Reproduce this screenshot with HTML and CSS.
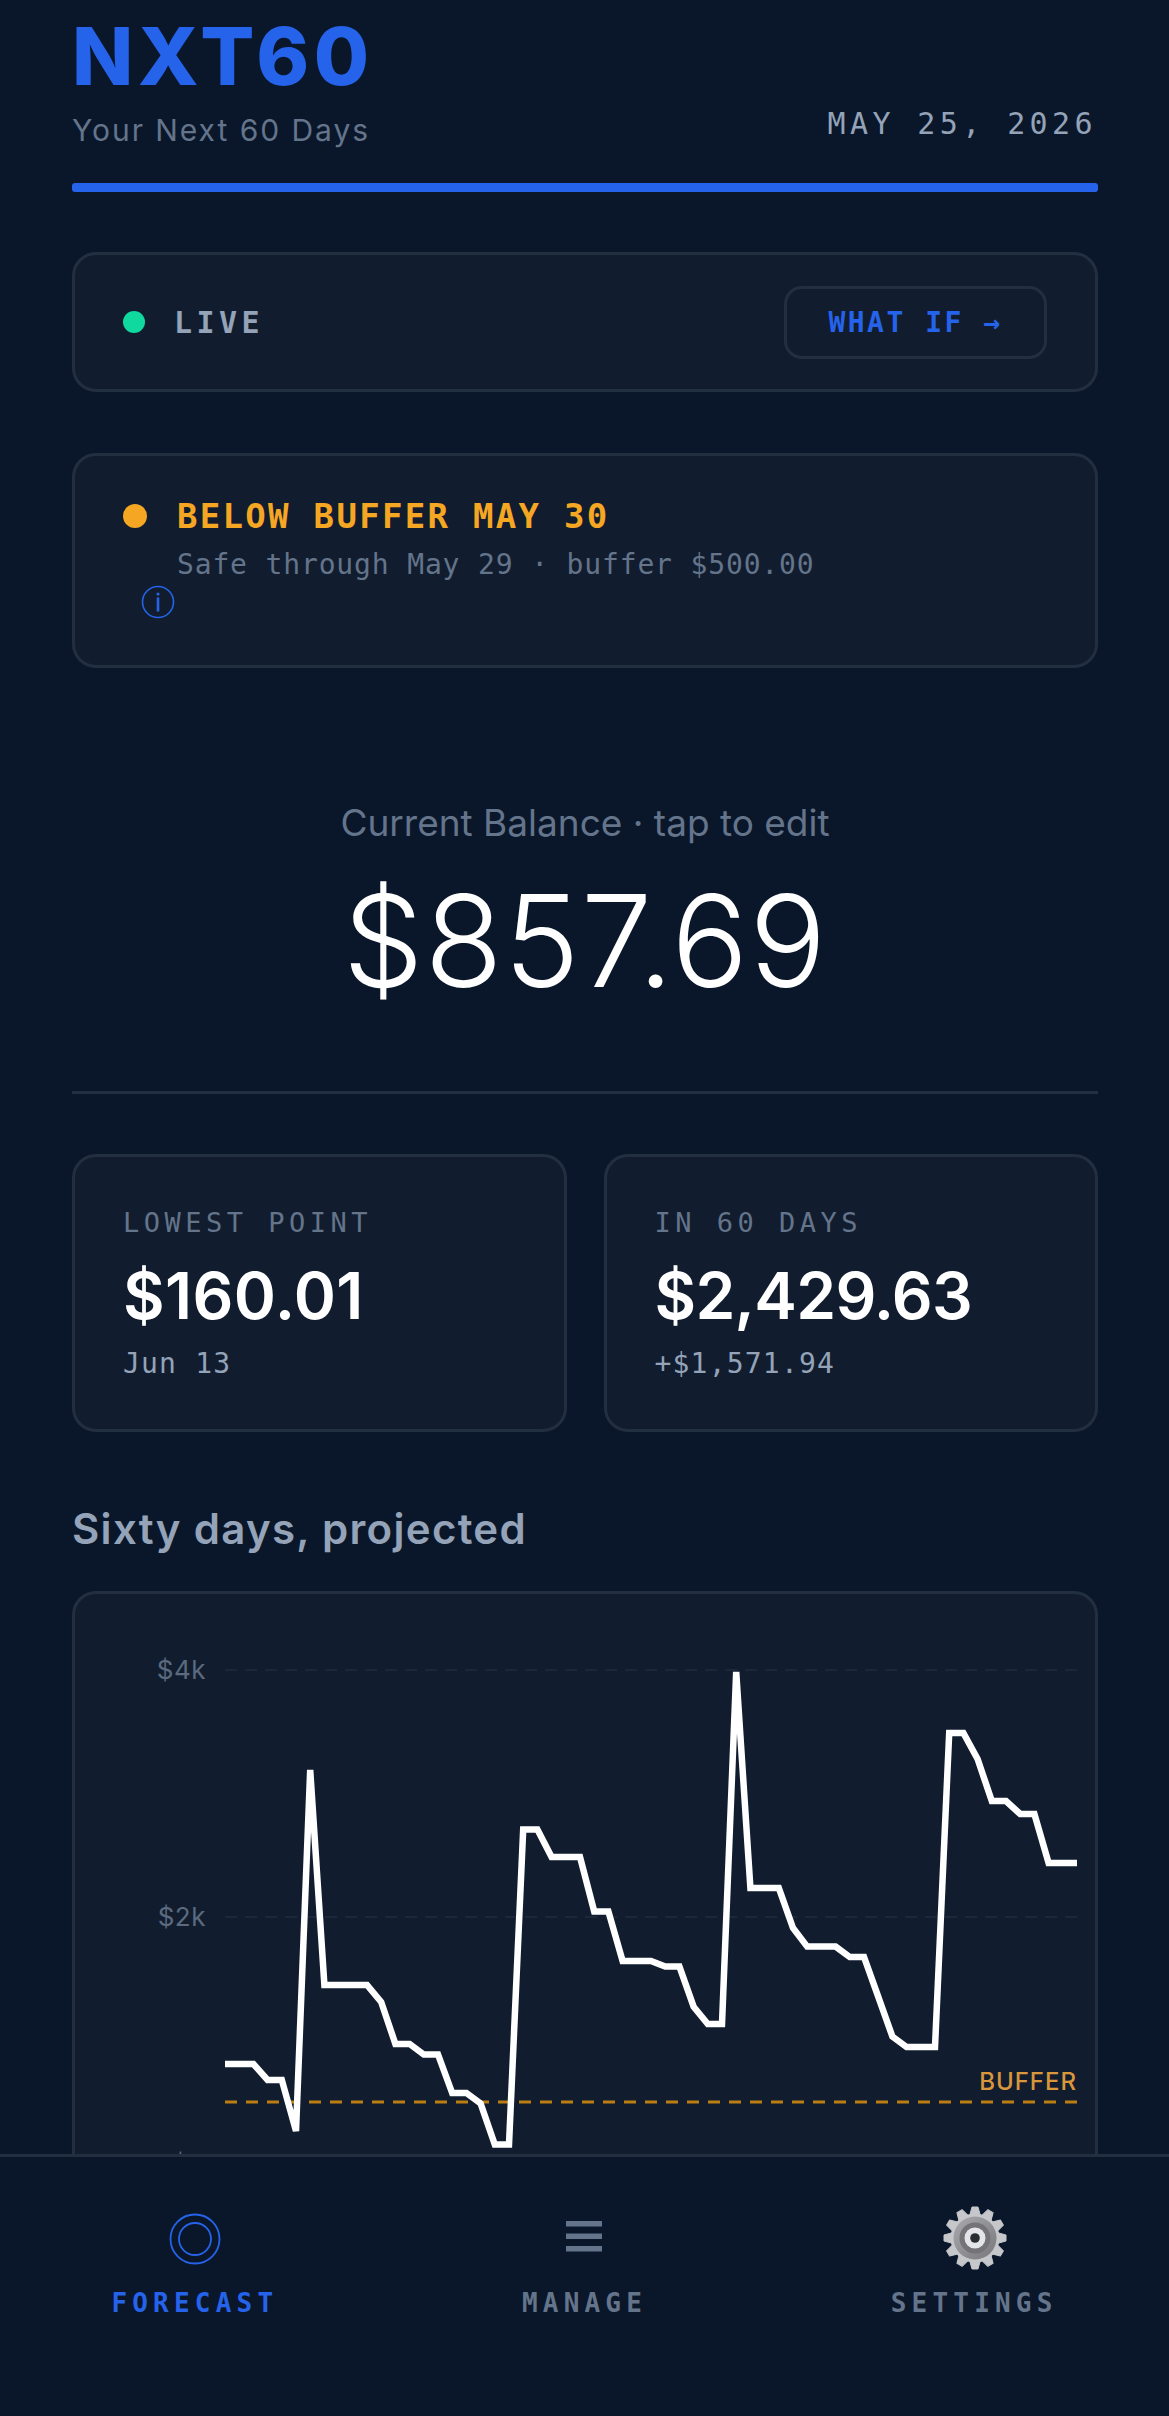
FILE: index.html
```html
<!DOCTYPE html>
<html lang="en">
<head>
  <meta charset="UTF-8">
  <meta name="viewport" content="width=device-width, initial-scale=1.0">
  <title>NXT60</title>
  <link rel="stylesheet" href="styles.css">
</head>
<body>
  <main class="page">
    <header class="header">
      <div>
        <h1 class="logo">NXT60</h1>
        <div class="tagline">Your Next 60 Days</div>
      </div>
      <div class="today">MAY 25, 2026</div>
    </header>
    <div class="rule"></div>

    <section class="card status">
      <div class="status-left">
        <span class="dot dot-live"></span>
        <span class="status-text">LIVE</span>
      </div>
      <button class="whatif">WHAT IF →</button>
    </section>

    <section class="card alert">
      <div class="alert-row">
        <span class="dot dot-warn"></span>
        <span class="alert-title">BELOW BUFFER MAY 30</span>
      </div>
      <div class="alert-sub">Safe through May 29 · buffer $500.00</div>
      <svg class="info" width="34" height="34" viewBox="0 0 34 34">
        <circle cx="17" cy="17" r="15.5" fill="none" stroke="#2563eb" stroke-width="1.6"/>
        <rect x="15.7" y="12.5" width="2.6" height="14" fill="#2563eb"/>
        <circle cx="17" cy="9" r="1.6" fill="#2563eb"/>
      </svg>
    </section>

    <section class="balance">
      <div class="balance-label">Current Balance · tap to edit</div>
      <div class="balance-value">$857.69</div>
    </section>

    <div class="stats">
      <div class="card stat">
        <div class="stat-label">LOWEST POINT</div>
        <div class="stat-value">$160.01</div>
        <div class="stat-sub">Jun 13</div>
      </div>
      <div class="card stat">
        <div class="stat-label">IN 60 DAYS</div>
        <div class="stat-value">$2,429.63</div>
        <div class="stat-sub">+$1,571.94</div>
      </div>
    </div>

    <h2 class="section-title">Sixty days, projected</h2>

    <div class="card chart">
      <!-- viewBox uses the same numbers as the page so the chart lines up with the screen -->
      <svg class="chart-svg" width="1019" height="640" viewBox="75 1594 1019 640">
        <g class="grid-lines">
          <line x1="225" y1="1670" x2="1079" y2="1670"/>
          <line x1="225" y1="1917" x2="1079" y2="1917"/>
          <line x1="225" y1="2164" x2="1079" y2="2164"/>
        </g>
        <g class="axis">
          <text x="206" y="1679">$4k</text>
          <text x="206" y="1926">$2k</text>
          <text x="206" y="2173">$0</text>
        </g>
        <line class="buffer-line" x1="225" y1="2102" x2="1077" y2="2102"/>
        <text class="buffer-label" x="1077" y="2090">BUFFER</text>
        <polyline class="balance-line" points="225,2064 239.2,2064 253.4,2064 267.6,2080 281.8,2080 296,2131 310.2,1770 324.4,1985 338.6,1985 352.8,1985 367,1985 381.2,2002 395.4,2044 409.6,2044 423.8,2054.5 438,2054.5 452.2,2093 466.4,2093 480.6,2103.5 494.8,2144.5 509,2144.5 523.2,1829.5 537.4,1829.5 551.6,1857 565.8,1857 580,1857 594.2,1911.4 608.4,1911.4 622.6,1961 636.8,1961 651,1961 665.2,1966.5 679.4,1966.5 693.6,2006.7 707.8,2024 722,2024 736.2,1672 750.4,1888 764.6,1888 778.8,1888 793,1928 807.2,1946.6 821.4,1946.6 835.6,1946.6 849.8,1957 864,1957 878.2,1996.7 892.4,2036.5 906.6,2047 920.8,2047 935,2047 949.2,1733 963.4,1733 977.6,1759 991.8,1801 1006,1801 1020.2,1814 1034.4,1814 1048.6,1863 1062.8,1863 1077,1863"/>
      </svg>
    </div>
  </main>

  <nav class="tabbar">
    <div class="tab tab-active">
      <span class="tab-icon">
        <svg width="52" height="52" viewBox="0 0 52 52" fill="none" stroke="#2563eb" stroke-width="1.8">
          <circle cx="26" cy="26" r="24.5"/>
          <circle cx="26" cy="26" r="16"/>
        </svg>
      </span>
      <span class="tab-label">FORECAST</span>
    </div>
    <div class="tab">
      <span class="tab-icon tab-icon-bars">
        <svg width="36" height="32" viewBox="0 0 36 32" fill="#64748b">
          <rect x="0" y="0" width="36" height="5.5"/>
          <rect x="0" y="12.5" width="36" height="5.5"/>
          <rect x="0" y="25" width="36" height="5.5"/>
        </svg>
      </span>
      <span class="tab-label">MANAGE</span>
    </div>
    <div class="tab">
      <span class="tab-icon tab-icon-gear">
        <svg width="66" height="66" viewBox="-33 -33 66 66">
          <defs>
            <linearGradient id="gearRing" x1="0" y1="0" x2="1" y2="1">
              <stop offset="0" stop-color="#a9a9ae"/>
              <stop offset="1" stop-color="#77777c"/>
            </linearGradient>
            <polygon id="gearTooth" points="-3,-31 3,-31 5.5,-22 -5.5,-22" fill="#c6c7cb" stroke="#c6c7cb" stroke-width="1" stroke-linejoin="round"/>
          </defs>
          <use href="#gearTooth"/>
          <use href="#gearTooth" transform="rotate(30)"/>
          <use href="#gearTooth" transform="rotate(60)"/>
          <use href="#gearTooth" transform="rotate(90)"/>
          <use href="#gearTooth" transform="rotate(120)"/>
          <use href="#gearTooth" transform="rotate(150)"/>
          <use href="#gearTooth" transform="rotate(180)"/>
          <use href="#gearTooth" transform="rotate(210)"/>
          <use href="#gearTooth" transform="rotate(240)"/>
          <use href="#gearTooth" transform="rotate(270)"/>
          <use href="#gearTooth" transform="rotate(300)"/>
          <use href="#gearTooth" transform="rotate(330)"/>
          <circle r="24.5" fill="#c6c7cb"/>
          <circle r="21.5" fill="url(#gearRing)"/>
          <circle r="15.5" fill="#737378"/>
          <circle r="10.5" fill="#e4e5e8"/>
          <circle r="4.8" fill="#2a2d33"/>
        </svg>
      </span>
      <span class="tab-label">SETTINGS</span>
    </div>
  </nav>
</body>
</html>
```

FILE: styles.css
```css
html, body {
  height: 100%;
  overflow: hidden;
}

body {
  margin: 0;
  background: #0a172a;
  color: white;
  font-family: Inter, "Liberation Sans", sans-serif;
}

.page {
  padding: 0 71px 0 72px;
}

.card {
  background: #111d2e;
  border: 3px solid #222f41;
  border-radius: 24px;
  box-sizing: border-box;
}

.dot {
  display: inline-block;
  border-radius: 50%;
}

/* header */
.header {
  display: flex;
  justify-content: space-between;
  align-items: flex-end;
  height: 183px;
  padding-bottom: 32px;
  box-sizing: border-box;
}

.logo {
  margin: 0;
  font-size: 80px;
  font-weight: 800;
  line-height: 108px;
  letter-spacing: 4.6px;
  color: #2563eb;
}

.tagline {
  font-size: 30px;
  line-height: 41px;
  letter-spacing: 1.95px;
  color: #64748b;
}

.today {
  margin: 0 1px 7px 0;
  font-family: "DejaVu Sans Mono", monospace;
  font-size: 30px;
  line-height: 40px;
  letter-spacing: 4.4px;
  color: #94a3b8;
}

.rule {
  height: 9px;
  border-radius: 3px;
  background: #2563eb;
}

/* live strip */
.status {
  display: flex;
  align-items: center;
  justify-content: space-between;
  height: 140px;
  margin-top: 60px;
  padding: 0 48px;
}

.status-left {
  display: flex;
  align-items: center;
  gap: 29px;
}

.dot-live {
  width: 22px;
  height: 22px;
  background: #10d9a0;
}

.status-text {
  font-family: "DejaVu Sans Mono", monospace;
  font-size: 30px;
  font-weight: 700;
  letter-spacing: 4.4px;
  color: #94a3b8;
}

.whatif {
  width: 263px;
  height: 73px;
  padding: 0;
  background: none;
  border: 3px solid #222f41;
  border-radius: 18px;
  font-family: "DejaVu Sans Mono", monospace;
  font-size: 28px;
  font-weight: 700;
  letter-spacing: 2.5px;
  color: #2563eb;
}

/* alert */
.alert {
  position: relative;
  height: 215px;
  margin-top: 61px;
  padding: 40px 48px 0;
}

.alert-row {
  display: flex;
  align-items: center;
  gap: 30px;
}

.dot-warn {
  width: 24px;
  height: 24px;
  background: #f5a623;
}

.alert-title {
  font-family: "DejaVu Sans Mono", monospace;
  font-size: 34px;
  font-weight: 700;
  letter-spacing: 2.3px;
  color: #f5a623;
}

.alert-sub {
  margin: 12px 0 0 54px;
  font-family: "DejaVu Sans Mono", monospace;
  font-size: 28px;
  letter-spacing: 0.85px;
  color: #64748b;
}

.info {
  display: block;
  margin: 4px 0 0 18px;
}

/* balance */
.balance {
  height: 426px;
  box-sizing: border-box;
  padding-top: 134px;
  border-bottom: 3px solid #222f41;
  text-align: center;
}

.balance-label {
  font-size: 37px;
  line-height: 42px;
  color: #64748b;
}

.balance-value {
  margin-top: 27px;
  font-size: 128px;
  font-weight: 300;
  line-height: 140px;
  letter-spacing: 1px;
}

/* stats */
.stats {
  display: grid;
  grid-template-columns: 1fr 1fr;
  gap: 37px;
  margin-top: 60px;
}

.stat {
  height: 278px;
  padding: 46px 48px 0;
}

.stat-label {
  font-family: "DejaVu Sans Mono", monospace;
  font-size: 27px;
  line-height: 40px;
  letter-spacing: 4.5px;
  color: #64748b;
}

.stat-value {
  margin-top: 14px;
  font-size: 64px;
  font-weight: 600;
  line-height: 78px;
  letter-spacing: 0.4px;
}

.stat:last-child .stat-value {
  letter-spacing: -0.7px;
}

.stat-sub {
  margin-top: 9px;
  font-family: "DejaVu Sans Mono", monospace;
  font-size: 28px;
  line-height: 40px;
  letter-spacing: 1.2px;
  color: #94a3b8;
}

/* chart */
.section-title {
  margin: 67px 0 0;
  font-size: 42px;
  font-weight: 600;
  line-height: 60px;
  letter-spacing: 1.3px;
  color: #94a3b8;
}

.chart {
  margin-top: 32px;
  height: 900px;
  overflow: hidden;
}

.chart-svg {
  display: block;
}

.grid-lines line {
  stroke: #1c2839;
  stroke-width: 2;
  stroke-dasharray: 12 8;
}

.axis text {
  font-size: 26px;
  letter-spacing: 0.5px;
  text-anchor: end;
  fill: #5b6a7f;
}

.buffer-line {
  stroke: #f59e0b;
  stroke-opacity: 0.75;
  stroke-width: 3;
  stroke-dasharray: 12 9;
}

.buffer-label {
  font-size: 24px;
  font-weight: 500;
  letter-spacing: 1px;
  text-anchor: end;
  fill: #d9963a;
}

.balance-line {
  fill: none;
  stroke: white;
  stroke-width: 6.5;
}

/* bottom tabs */
.tabbar {
  position: fixed;
  left: 0;
  right: 0;
  bottom: 0;
  height: 262px;
  box-sizing: border-box;
  display: grid;
  grid-template-columns: repeat(3, 1fr);
  background: #0a172a;
  border-top: 3px solid #222f41;
}

.tab {
  display: flex;
  flex-direction: column;
  align-items: center;
}

.tab-icon {
  display: flex;
  align-items: center;
  justify-content: center;
  height: 66px;
  margin-top: 49px;
}

.tab-label {
  margin-top: 13px;
  font-family: "DejaVu Sans Mono", monospace;
  font-size: 26px;
  font-weight: 700;
  line-height: 36px;
  letter-spacing: 5.2px;
  color: #64748b;
}

.tab-active .tab-label {
  color: #2563eb;
}

.tab-icon-bars svg {
  margin-bottom: 5px;
}

.tab-icon-gear svg {
  margin: -2px 0 0 2px;
}
```
